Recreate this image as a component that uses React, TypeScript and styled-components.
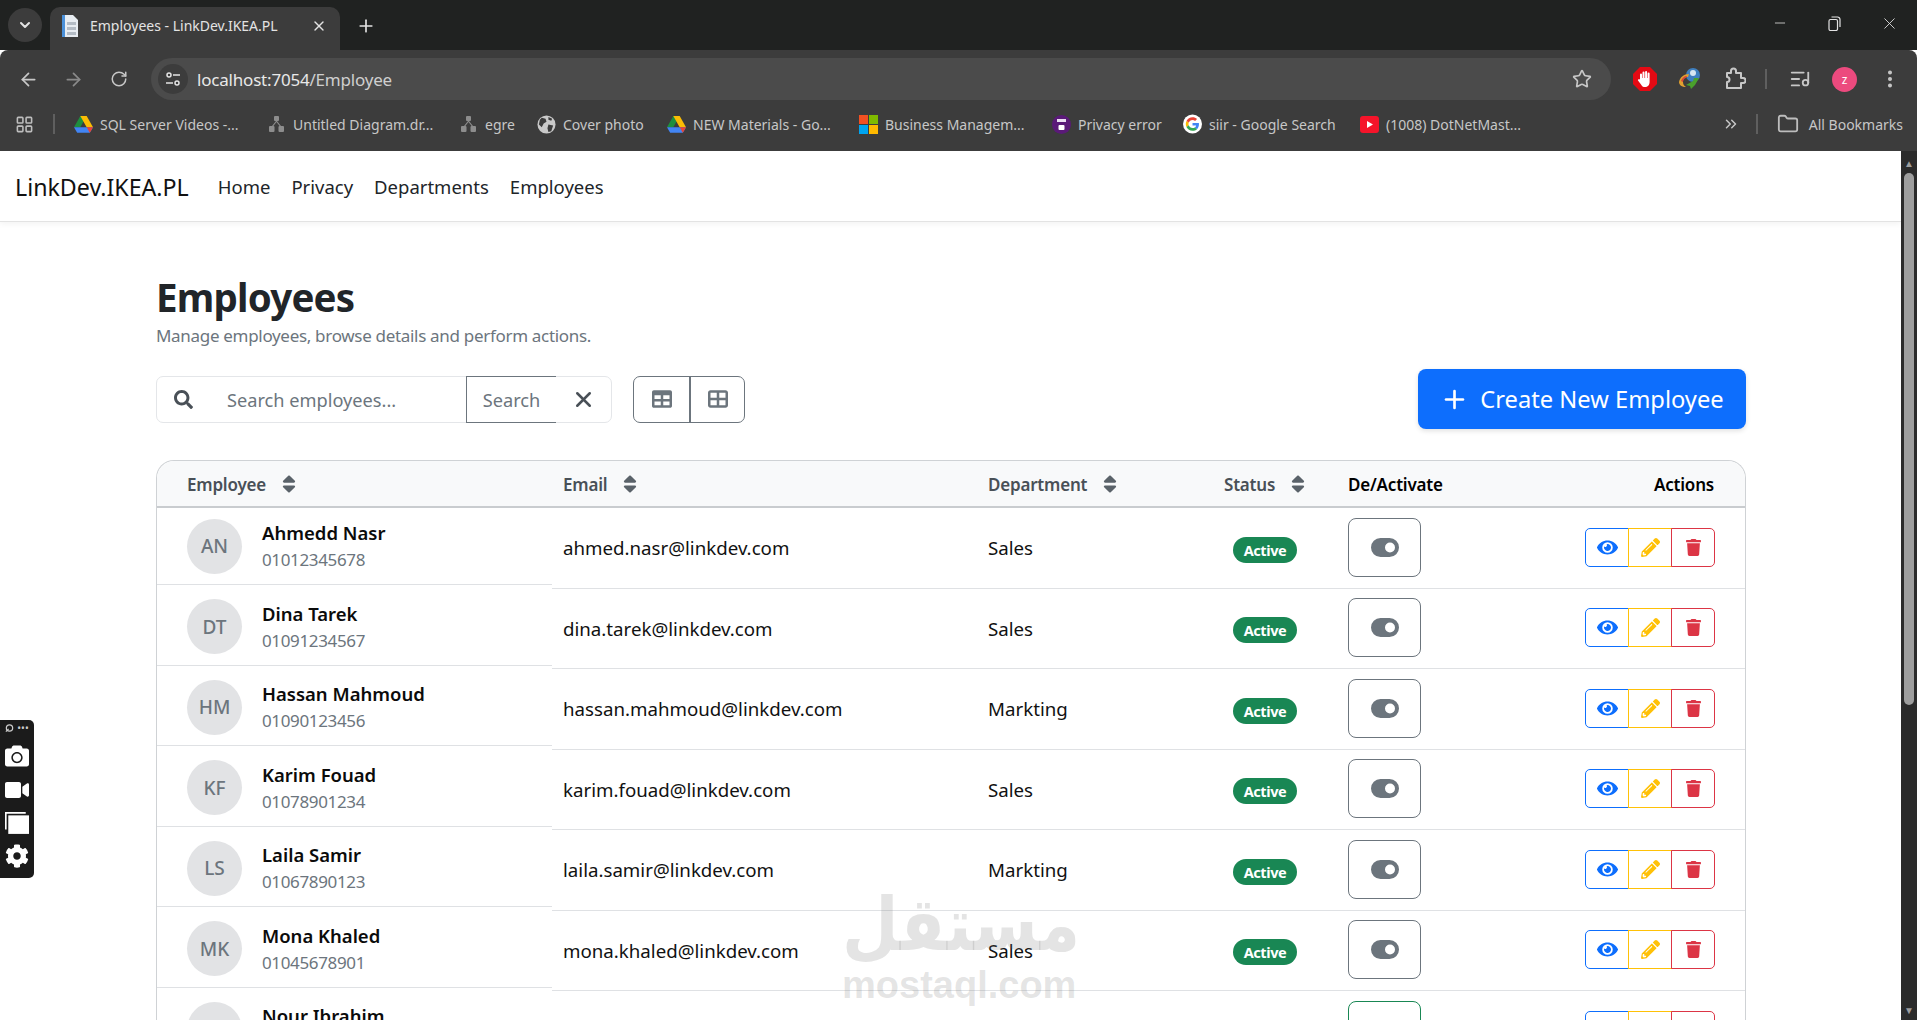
import React from 'react';
import styled, { createGlobalStyle } from 'styled-components';
import {
  FaCamera,
  FaCog,
  FaEye,
  FaPencilAlt,
  FaSearch,
  FaSort,
  FaTable,
  FaTrash,
  FaVideo,
} from 'react-icons/fa';
import { FaTableCellsLarge } from 'react-icons/fa6';
import {
  ArrowLeft,
  ArrowRight,
  ChevronDown,
  ChevronsRight,
  EllipsisVertical,
  Folder,
  LayoutGrid,
  ListMusic,
  Minus,
  Plus,
  RotateCw,
  Star,
  X,
} from 'lucide-react';

const UI_FONT = '"Noto Sans", "Open Sans", sans-serif';

const GlobalStyle = createGlobalStyle`
  html, body {
    margin: 0;
    height: 100%;
    overflow: hidden;
    background: #fff;
    font-family: ${UI_FONT};
  }
  * { box-sizing: border-box; }
`;

const Shell = styled.div`
  position: relative;
  height: 100vh;
  display: flex;
  flex-direction: column;
  overflow: hidden;
`;

/* ---- browser chrome ---- */

const TabStrip = styled.div`
  height: 50px;
  flex: none;
  display: flex;
  align-items: flex-end;
  background: #202221;
  padding-left: 8px;
  color: #e3e3e3;
`;

const TabSearch = styled.div`
  width: 34px;
  height: 34px;
  margin: 0 8px 8px 0;
  border-radius: 17px;
  background: #3c3c3c;
  display: flex;
  align-items: center;
  justify-content: center;
`;

const Tab = styled.div`
  width: 290px;
  height: 43px;
  background: #3c3c3c;
  border-radius: 10px 10px 0 0;
  display: flex;
  align-items: center;
  padding: 0 13px 6px 10px;
  gap: 10px;
  font-size: 14px;
`;

const TabTitle = styled.span`
  flex: 1;
  white-space: nowrap;
`;

const NewTab = styled.div`
  width: 52px;
  height: 43px;
  padding-bottom: 6px;
  display: flex;
  align-items: center;
  justify-content: center;
`;

const WindowControls = styled.div`
  margin-left: auto;
  height: 46px;
  align-self: flex-start;
  display: flex;
  align-items: center;
`;

const WindowButton = styled.div`
  width: 55px;
  display: flex;
  justify-content: center;
  color: #e3e3e3;
`;

const Toolbar = styled.div`
  height: 50px;
  flex: none;
  background: #3c3c3c;
  display: flex;
  align-items: center;
  padding: 8px 0 0 6px;
  border-radius: 8px 8px 0 0;
`;

const NavIcon = styled.div<{ $dim?: boolean }>`
  width: 45px;
  display: flex;
  justify-content: center;
  color: ${(p) => (p.$dim ? '#8a8a8a' : '#c7c7c7')};
`;

const Omnibox = styled.div`
  width: 1460px;
  height: 42px;
  margin-left: 10px;
  background: #4b4b4b;
  border-radius: 21px;
  display: flex;
  align-items: center;
  padding: 0 19px 0 7px;
  font-size: 17px;
  letter-spacing: -0.2px;
`;

const SiteChip = styled.div`
  width: 30px;
  height: 30px;
  border-radius: 50%;
  background: #3c3c3c;
  display: flex;
  align-items: center;
  justify-content: center;
  margin-right: 9px;
`;

const Host = styled.span`
  color: #e8e8e8;
`;

const UrlPath = styled.span`
  color: #cfcfcf;
  flex: 1;
`;

const ExtArea = styled.div`
  margin-left: 11px;
  display: flex;
  align-items: center;
`;

const ExtSlot = styled.div`
  width: 45px;
  display: flex;
  justify-content: center;
  align-items: center;
  color: #c7c7c7;
`;

const ToolbarRule = styled.div`
  width: 2px;
  height: 20px;
  margin: 0 10px 0 8px;
  background: #5f5f5f;
`;

const ProfileDot = styled.div`
  width: 25px;
  height: 25px;
  border-radius: 50%;
  background: #ec4a7e;
  color: #fff;
  font-size: 12px;
  display: flex;
  align-items: center;
  justify-content: center;
`;

const BookmarkBar = styled.div`
  height: 51px;
  flex: none;
  background: #3c3c3c;
  display: flex;
  align-items: center;
  padding: 0 0 3px 15px;
  font-size: 14px;
  color: #c7c7c7;
`;

const AppsSlot = styled.div`
  width: 38px;
  display: flex;
  color: #bdbdbd;
`;

const BarRule = styled.div`
  width: 2px;
  height: 20px;
  background: #5f5f5f;
  flex: none;
`;

const Bookmark = styled.div<{ $w: number }>`
  flex: none;
  width: ${(p) => p.$w}px;
  display: flex;
  align-items: center;
  white-space: nowrap;
  gap: 7px;
`;

const BookmarkIcon = styled.div`
  width: 19px;
  height: 19px;
  display: flex;
  align-items: center;
  justify-content: center;
  color: #9a9a9a;
`;

const BookmarkEnd = styled.div`
  margin-left: auto;
  display: flex;
  align-items: center;
  padding-right: 14px;
`;

/* ---- page ---- */

const Viewport = styled.div`
  flex: 1;
  min-height: 0;
  display: flex;
`;

const Page = styled.div`
  flex: 1;
  min-width: 0;
  overflow: hidden;
  color: #212529;
`;

const Scrollbar = styled.div`
  width: 16px;
  flex: none;
  background: #2b2b2b;
  display: flex;
  flex-direction: column;
  align-items: center;
  padding: 6px 0 4px;
  color: #9e9e9e;
  font-size: 10px;
  line-height: 12px;
`;

const ScrollThumb = styled.div`
  width: 10px;
  height: 532px;
  margin-top: 4px;
  border-radius: 5px;
  background: #9e9e9e;
`;

const ScrollEnd = styled.div`
  margin-top: auto;
`;

const Navbar = styled.nav`
  height: 71px;
  display: flex;
  align-items: center;
  padding: 1px 15px 0;
  background: #fff;
  border-bottom: 1px solid #e3e3e3;
  box-shadow: 0 2px 6px rgba(0, 0, 0, 0.05);
`;

const Brand = styled.a`
  font-size: 23.2px;
  color: #111;
  margin-right: 29px;
`;

const NavLink = styled.a`
  font-size: 18.5px;
  color: #212529;
  margin-right: 21px;
`;

const Main = styled.main`
  padding: 48px 155px 0 156px;
`;

const Title = styled.h1`
  margin: 0;
  font-size: 38.5px;
  line-height: 54px;
  font-weight: 700;
  letter-spacing: -0.8px;
`;

const Subtitle = styled.p`
  margin: 0;
  font-size: 17px;
  line-height: 24px;
  letter-spacing: -0.31px;
  color: #6c757d;
`;

const ActionBar = styled.div`
  display: flex;
  align-items: center;
  margin-top: 21px;
`;

const SearchGroup = styled.div`
  width: 456px;
  height: 47px;
  display: flex;
  align-items: stretch;
  border: 1px solid #e4e6e9;
  border-radius: 7px;
  font-size: 18.2px;
  color: #6c757d;
`;

const SearchIconBox = styled.div`
  width: 70px;
  flex: none;
  display: flex;
  align-items: center;
  padding-left: 17px;
  color: #495057;
`;

const Placeholder = styled.div`
  flex: 1;
  display: flex;
  align-items: center;
  padding-top: 2px;
`;

const SearchButton = styled.div`
  width: 90px;
  margin: -1px 0;
  padding-top: 2px;
  border: 1px solid #6c757d;
  border-right: 0;
  display: flex;
  align-items: center;
  justify-content: center;
`;

const ClearButton = styled.div`
  width: 55px;
  flex: none;
  display: flex;
  align-items: center;
  justify-content: center;
  color: #495057;
`;

const ViewToggle = styled.div`
  display: flex;
  height: 47px;
  margin-left: 21px;
  border: 1px solid #6c757d;
  border-radius: 7px;
  color: #6c757d;
`;

const ViewButton = styled.div`
  width: 55px;
  display: flex;
  align-items: center;
  justify-content: center;
  & + & {
    border-left: 2px solid #6c757d;
  }
`;

const CreateButton = styled.a`
  margin-left: auto;
  height: 60px;
  width: 328px;
  border-radius: 8px;
  background: #0d6efd;
  color: #fff;
  display: flex;
  align-items: center;
  justify-content: center;
  gap: 11px;
  font-size: 23.7px;
  box-shadow: 0 2px 5px rgba(0, 0, 0, 0.12);
`;

const TableCard = styled.div`
  margin-top: 31px;
  border: 1px solid #cfd2d5;
  border-bottom: 0;
  border-radius: 18px 18px 0 0;
`;

const columns = '395px 425px 236px 124px 160px 1fr';

const HeaderRow = styled.div`
  display: grid;
  grid-template-columns: ${columns};
  height: 47px;
  background: #f8f9fa;
  border-radius: 18px 18px 0 0;
  border-bottom: 2px solid #c9cccf;
`;

const HeadCell = styled.div<{ $pad: number; $strong?: boolean; $end?: boolean }>`
  display: flex;
  align-items: center;
  gap: 12px;
  padding: 1px ${(p) => (p.$end ? 31 : 0)}px 0 ${(p) => p.$pad}px;
  justify-content: ${(p) => (p.$end ? 'flex-end' : 'flex-start')};
  font-size: 17px;
  font-weight: 600;
  letter-spacing: -0.2px;
  color: ${(p) => (p.$strong ? '#000' : '#495057')};
`;

const Row = styled.div`
  display: grid;
  grid-template-columns: ${columns};
  height: 80.5px;
`;

const Cell = styled.div<{ $pad: number; $end?: boolean }>`
  display: flex;
  align-items: center;
  padding: 0 ${(p) => (p.$end ? 30 : 0)}px 0 ${(p) => p.$pad}px;
  justify-content: ${(p) => (p.$end ? 'flex-end' : 'flex-start')};
  border-bottom: 1px solid #dfe1e4;
  font-size: 18.7px;
  color: #111;
`;

const EmployeeCell = styled.div`
  height: 77px;
  display: flex;
  align-items: center;
  gap: 20px;
  padding-left: 30px;
  border-bottom: 1px solid #dfe1e4;
`;

const Initials = styled.div`
  width: 55px;
  height: 55px;
  flex: none;
  border-radius: 50%;
  background: #e2e3e5;
  color: #6c757d;
  display: flex;
  align-items: center;
  justify-content: center;
  font-size: 19px;
  font-weight: 500;
`;

const Name = styled.div`
  font-size: 18.5px;
  line-height: 27px;
  font-weight: 600;
  color: #0b0b0b;
`;

const Phone = styled.div`
  font-size: 17px;
  line-height: 27px;
  letter-spacing: -0.35px;
  color: #6c757d;
`;

const Badge = styled.span`
  display: inline-flex;
  align-items: center;
  justify-content: center;
  width: 64px;
  height: 26px;
  margin-top: 4px;
  border-radius: 13px;
  background: #198754;
  color: #fff;
  font-size: 14.5px;
  font-weight: 700;
  letter-spacing: -0.4px;
`;

const ToggleButton = styled.div<{ $on?: boolean }>`
  width: 73px;
  height: 59px;
  margin-bottom: 1px;
  border: 1px solid ${(p) => (p.$on ? '#198754' : '#6c757d')};
  border-radius: 8px;
  display: flex;
  align-items: center;
  justify-content: center;
  color: ${(p) => (p.$on ? '#198754' : '#6c757d')};
`;

const ActionGroup = styled.div`
  display: flex;
  height: 39px;
  margin-bottom: 1px;
`;

const ActionButton = styled.div<{ $color: string }>`
  width: 44px;
  border: 1px solid ${(p) => p.$color};
  color: ${(p) => p.$color};
  display: flex;
  align-items: center;
  justify-content: center;
  margin-left: -1px;
  &:first-child {
    border-radius: 5px 0 0 5px;
  }
  &:last-child {
    border-radius: 0 5px 5px 0;
  }
`;

/* ---- things lying over the page ---- */

const CapturePanel = styled.div`
  position: absolute;
  left: 0;
  top: 720px;
  width: 34px;
  height: 158px;
  background: #1b1b1b;
  border-radius: 0 5px 5px 0;
  display: flex;
  flex-direction: column;
  align-items: center;
  gap: 10px;
  padding-top: 2px;
  color: #fff;
`;

const PanelTop = styled.div`
  display: flex;
  align-items: center;
  gap: 3px;
  color: #ccc;
  height: 12px;
  font-size: 10px;
  line-height: 6px;
`;

const Watermark = styled.div`
  position: absolute;
  left: 842px;
  top: 881px;
  width: 232px;
  pointer-events: none;
  color: rgba(120, 120, 120, 0.2);
`;

const WatermarkArabic = styled.div`
  font-family: 'DejaVu Sans', sans-serif;
  font-size: 74px;
  font-weight: 700;
  line-height: 86px;
  transform: scaleX(0.88);
  transform-origin: left center;
  white-space: nowrap;
`;

const WatermarkLatin = styled.div`
  font-family: 'Liberation Sans', sans-serif;
  font-size: 38px;
  font-weight: 700;
  line-height: 36px;
  white-space: nowrap;
`;

/* ---- small logos ---- */

const DriveLogo = () => (
  <svg width="19" height="18" viewBox="0 0 24 22">
    <polygon points="8,0 16,0 8,14 0,14" fill="#1e8e3e" transform="translate(0,1)" />
    <polygon points="16,1 24,15 16,15 8,1" fill="#fbbc04" />
    <polygon points="4,15 24,15 20,22 4,22 0,15" fill="#4285f4" />
    <polygon points="24,15 20,22 16,15" fill="#ea4335" />
  </svg>
);

const DiagramLogo = () => (
  <svg width="15" height="16" viewBox="0 0 15 16" fill="#8d8d8d">
    <rect x="5" y="0" width="5" height="5" rx="1" />
    <rect x="0" y="10" width="5.5" height="6" rx="1" />
    <rect x="9.5" y="10" width="5.5" height="6" rx="1" />
    <path d="M7 5 3 10h1.4L7.5 6l3.1 4H12L8 5z" />
  </svg>
);

const GlobeLogo = () => (
  <svg width="19" height="19" viewBox="0 0 20 20">
    <circle cx="10" cy="10" r="9.5" fill="#c9c9c9" />
    <path d="M5 3l4 1 1 3-3 2-2 4-3-3 1-5zM12 10l5 1-2 6-3 1-1-4zM12 2l4 2-1 2-3-1z" fill="#3c3c3c" />
  </svg>
);

const MicrosoftLogo = () => (
  <svg width="19" height="19" viewBox="0 0 19 19">
    <rect width="9" height="9" fill="#f25022" />
    <rect x="10" width="9" height="9" fill="#7fba00" />
    <rect y="10" width="9" height="9" fill="#00a4ef" />
    <rect x="10" y="10" width="9" height="9" fill="#ffb900" />
  </svg>
);

const SiirLogo = () => (
  <svg width="19" height="19" viewBox="0 0 19 19">
    <circle cx="9.5" cy="9.5" r="9.5" fill="#5a1a78" />
    <rect x="5" y="4" width="9" height="3" fill="#e9dff0" />
    <rect x="6.5" y="10" width="6" height="5" rx="1" fill="#fff" />
  </svg>
);

const GoogleLogo = () => (
  <svg width="20" height="20" viewBox="0 0 48 48">
    <circle cx="24" cy="24" r="24" fill="#fff" />
    <g transform="translate(7 7) scale(0.71)">
      <path fill="#EA4335" d="M24 9.5c3.5 0 6.7 1.2 9.2 3.6l6.9-6.9C35.9 2.4 30.5 0 24 0 14.6 0 6.5 5.4 2.6 13.2l8 6.2C12.4 13.7 17.7 9.5 24 9.5z" />
      <path fill="#4285F4" d="M46.9 24.5c0-1.6-.1-3.1-.4-4.5H24v9h12.9c-.6 3-2.2 5.5-4.8 7.2l7.7 6c4.5-4.2 7.1-10.3 7.1-17.7z" />
      <path fill="#FBBC05" d="M10.5 28.6c-.5-1.4-.8-3-.8-4.6s.3-3.2.8-4.6l-8-6.2C.9 16.5 0 20.1 0 24s.9 7.5 2.6 10.8l7.9-6.2z" />
      <path fill="#34A853" d="M24 48c6.5 0 11.9-2.1 15.9-5.8l-7.7-6c-2.2 1.4-4.9 2.3-8.2 2.3-6.3 0-11.6-4.2-13.5-9.9l-8 6.2C6.5 42.6 14.6 48 24 48z" />
    </g>
  </svg>
);

const YoutubeLogo = () => (
  <svg width="19" height="19" viewBox="0 0 19 19">
    <rect y="1" width="19" height="17" rx="3" fill="#f5142a" />
    <polygon points="7,6 13,9.5 7,13" fill="#fff" />
  </svg>
);

const Favicon = () => (
  <svg width="20" height="24" viewBox="0 0 20 24">
    <path d="M2 1h11l5 5v17H2z" fill="#e8edf2" />
    <rect x="2" y="1" width="3" height="22" fill="#4a90d9" />
    <path d="M7 8h9v3H7zM7 13h9v3H7zM7 18h9v3H7z" fill="#b4bcc5" />
  </svg>
);

const TuneGlyph = () => (
  <svg width="16" height="16" viewBox="0 0 16 16" fill="none" stroke="#e3e3e3" strokeWidth="1.5">
    <circle cx="4" cy="4" r="2" />
    <circle cx="12" cy="12" r="2" />
    <path d="M8 4h7M1 12h7" />
  </svg>
);

const RestoreGlyph = () => (
  <svg width="13" height="15" viewBox="0 0 13 15" fill="none" stroke="#e3e3e3" strokeWidth="1.2">
    <rect x="1" y="3.5" width="8.5" height="11" rx="1.5" />
    <path d="M3.5 1h6a2.5 2.5 0 0 1 2.5 2.5V11" />
  </svg>
);

const BlockerLogo = () => (
  <svg width="24" height="24" viewBox="0 0 24 24">
    <polygon points="7,0 17,0 24,7 24,17 17,24 7,24 0,17 0,7" fill="#e40a14" />
    <path d="M7 12V7.5a1 1 0 0 1 2 0V11h.5V5.5a1 1 0 0 1 2 0V11h.6V5a1 1 0 0 1 2 0v6h.5V6.5a1 1 0 0 1 2 0V15c0 3-2 5-4.6 5-2 0-3.2-1-4-2.6L5 13.5c-.5-1 .9-1.8 1.6-.9z" fill="#fff" />
  </svg>
);

const DownloaderLogo = () => (
  <svg width="24" height="24" viewBox="0 0 24 24">
    <circle cx="15" cy="8" r="7" fill="#3f7fbf" />
    <circle cx="15" cy="6" r="3" fill="#d8e6f2" />
    <path d="M1 15c1-5 5-8 10-8l-1 3c-3 0-5 2-5 5 0 2 1 4 3 5-4 0-7-2-7-5z" fill="#e0a030" />
    <path d="M3 14c1-3 3-5 6-5l-1 2c-2 0-3 2-3 4z" fill="#d8423a" />
    <path d="M8 18l7-4 1-3h5l-4 7-4 4-1-3z" fill="#4aa02c" />
  </svg>
);

const PuzzleGlyph = () => (
  <svg width="22" height="24" viewBox="0 0 22 24" fill="none" stroke="#c7c7c7" strokeWidth="2" strokeLinejoin="round">
    <path d="M3 6h4V4a2.5 2.5 0 0 1 5 0v2h5v5h2a2.5 2.5 0 0 1 0 5h-2v5H3v-6a2.5 2.5 0 0 0 0-5z" />
  </svg>
);

// the app's toggle is a short pill, fatter than the icon-font ones
const TogglePill = () => (
  <svg width="28" height="19" viewBox="0 0 28 19">
    <path
      fillRule="evenodd"
      fill="currentColor"
      d="M9.5 0h9a9.5 9.5 0 0 1 0 19h-9a9.5 9.5 0 0 1 0-19zM19 4.5a5 5 0 1 0 0 10 5 5 0 0 0 0-10z"
    />
  </svg>
);

const SortIcon = () => <FaSort size={22} color="#5a6269" />;

type Employee = {
  initials: string;
  name: string;
  phone: string;
  email: string;
  department: string;
  fresh?: boolean;
};

const employees: Employee[] = [
  { initials: 'AN', name: 'Ahmedd Nasr', phone: '01012345678', email: 'ahmed.nasr@linkdev.com', department: 'Sales' },
  { initials: 'DT', name: 'Dina Tarek', phone: '01091234567', email: 'dina.tarek@linkdev.com', department: 'Sales' },
  { initials: 'HM', name: 'Hassan Mahmoud', phone: '01090123456', email: 'hassan.mahmoud@linkdev.com', department: 'Markting' },
  { initials: 'KF', name: 'Karim Fouad', phone: '01078901234', email: 'karim.fouad@linkdev.com', department: 'Sales' },
  { initials: 'LS', name: 'Laila Samir', phone: '01067890123', email: 'laila.samir@linkdev.com', department: 'Markting' },
  { initials: 'MK', name: 'Mona Khaled', phone: '01045678901', email: 'mona.khaled@linkdev.com', department: 'Sales' },
  { initials: 'NI', name: 'Nour Ibrahim', phone: '01034567890', email: '', department: '', fresh: true },
];

const bookmarks = [
  { w: 193, label: 'SQL Server Videos -...', icon: <DriveLogo /> },
  { w: 192, label: 'Untitled Diagram.dr...', icon: <DiagramLogo /> },
  { w: 78, label: 'egre', icon: <DiagramLogo /> },
  { w: 130, label: 'Cover photo', icon: <GlobeLogo /> },
  { w: 192, label: 'NEW Materials - Go...', icon: <DriveLogo /> },
  { w: 193, label: 'Business Managem...', icon: <MicrosoftLogo /> },
  { w: 131, label: 'Privacy error', icon: <SiirLogo /> },
  { w: 177, label: 'siir - Google Search', icon: <GoogleLogo /> },
  { w: 150, label: '(1008) DotNetMast...', icon: <YoutubeLogo /> },
];

export default function App() {
  return (
    <Shell>
      <GlobalStyle />
      <TabStrip>
        <TabSearch>
          <ChevronDown size={16} strokeWidth={3} />
        </TabSearch>
        <Tab>
          <Favicon />
          <TabTitle>Employees - LinkDev.IKEA.PL</TabTitle>
          <X size={16} strokeWidth={2} />
        </Tab>
        <NewTab>
          <Plus size={20} strokeWidth={2} />
        </NewTab>
        <WindowControls>
          <WindowButton>
            <Minus size={16} strokeWidth={1.2} />
          </WindowButton>
          <WindowButton>
            <RestoreGlyph />
          </WindowButton>
          <WindowButton>
            <X size={19} strokeWidth={1.1} />
          </WindowButton>
        </WindowControls>
      </TabStrip>

      <Toolbar>
        <NavIcon>
          <ArrowLeft size={21} strokeWidth={2} />
        </NavIcon>
        <NavIcon $dim>
          <ArrowRight size={21} strokeWidth={2} />
        </NavIcon>
        <NavIcon>
          <RotateCw size={18} strokeWidth={2} />
        </NavIcon>
        <Omnibox>
          <SiteChip>
            <TuneGlyph />
          </SiteChip>
          <Host>localhost:7054</Host>
          <UrlPath>/Employee</UrlPath>
          <Star size={20} color="#c7c7c7" strokeWidth={2} />
        </Omnibox>
        <ExtArea>
          <ExtSlot>
            <BlockerLogo />
          </ExtSlot>
          <ExtSlot>
            <DownloaderLogo />
          </ExtSlot>
          <ExtSlot>
            <PuzzleGlyph />
          </ExtSlot>
          <ToolbarRule />
          <ExtSlot>
            <ListMusic size={22} strokeWidth={2} />
          </ExtSlot>
          <ExtSlot>
            <ProfileDot>z</ProfileDot>
          </ExtSlot>
          <ExtSlot>
            <EllipsisVertical size={22} strokeWidth={2.4} />
          </ExtSlot>
        </ExtArea>
      </Toolbar>

      <BookmarkBar>
        <AppsSlot>
          <LayoutGrid size={19} strokeWidth={2} />
        </AppsSlot>
        <BarRule />
        <Bookmark $w={19} />
        {bookmarks.map((b) => (
          <Bookmark key={b.label} $w={b.w}>
            <BookmarkIcon>{b.icon}</BookmarkIcon>
            {b.label}
          </Bookmark>
        ))}
        <BookmarkEnd>
          <ChevronsRight size={18} strokeWidth={2} />
          <Bookmark $w={16} />
          <BarRule />
          <Bookmark $w={19} />
          <Folder size={22} strokeWidth={2} color="#bdbdbd" />
          <Bookmark $w={10} />
          All Bookmarks
        </BookmarkEnd>
      </BookmarkBar>

      <Viewport>
        <Page>
          <Navbar>
            <Brand>LinkDev.IKEA.PL</Brand>
            <NavLink>Home</NavLink>
            <NavLink>Privacy</NavLink>
            <NavLink>Departments</NavLink>
            <NavLink>Employees</NavLink>
          </Navbar>
          <Main>
            <Title>Employees</Title>
            <Subtitle>Manage employees, browse details and perform actions.</Subtitle>
            <ActionBar>
              <SearchGroup>
                <SearchIconBox>
                  <FaSearch size={19} />
                </SearchIconBox>
                <Placeholder>Search employees...</Placeholder>
                <SearchButton>Search</SearchButton>
                <ClearButton>
                  <X size={25} strokeWidth={2.4} />
                </ClearButton>
              </SearchGroup>
              <ViewToggle>
                <ViewButton>
                  <FaTable size={20} />
                </ViewButton>
                <ViewButton>
                  <FaTableCellsLarge size={20} />
                </ViewButton>
              </ViewToggle>
              <CreateButton>
                <Plus size={29} strokeWidth={2.2} />
                Create New Employee
              </CreateButton>
            </ActionBar>

            <TableCard>
              <HeaderRow>
                <HeadCell $pad={30}>
                  Employee <SortIcon />
                </HeadCell>
                <HeadCell $pad={11}>
                  Email <SortIcon />
                </HeadCell>
                <HeadCell $pad={11}>
                  Department <SortIcon />
                </HeadCell>
                <HeadCell $pad={11}>
                  Status <SortIcon />
                </HeadCell>
                <HeadCell $pad={11} $strong>
                  De/Activate
                </HeadCell>
                <HeadCell $pad={0} $strong $end>
                  Actions
                </HeadCell>
              </HeaderRow>
              {employees.map((e) => (
                <Row key={e.initials}>
                  <EmployeeCell>
                    <Initials>{e.initials}</Initials>
                    <div>
                      <Name>{e.name}</Name>
                      <Phone>{e.phone}</Phone>
                    </div>
                  </EmployeeCell>
                  <Cell $pad={11}>{e.email}</Cell>
                  <Cell $pad={11}>{e.department}</Cell>
                  <Cell $pad={20}>
                    <Badge>Active</Badge>
                  </Cell>
                  <Cell $pad={11}>
                    <ToggleButton $on={e.fresh}>
                      {!e.fresh && <TogglePill />}
                    </ToggleButton>
                  </Cell>
                  <Cell $pad={0} $end>
                    <ActionGroup>
                      <ActionButton $color="#0d6efd">
                        <FaEye size={21} />
                      </ActionButton>
                      <ActionButton $color="#ffc107">
                        <FaPencilAlt size={19} />
                      </ActionButton>
                      <ActionButton $color="#dc3545">
                        <FaTrash size={17} />
                      </ActionButton>
                    </ActionGroup>
                  </Cell>
                </Row>
              ))}
            </TableCard>
          </Main>
        </Page>
        <Scrollbar>
          ▲
          <ScrollThumb />
          <ScrollEnd>▼</ScrollEnd>
        </Scrollbar>
      </Viewport>

      <CapturePanel>
        <PanelTop>
          <svg width="9" height="10" viewBox="0 0 10 10" fill="none" stroke="#ccc" strokeWidth="1.4">
            <circle cx="5" cy="5" r="3.5" />
            <path d="M1 9l3-3" />
          </svg>
          •••
        </PanelTop>
        <FaCamera size={24} />
        <FaVideo size={24} />
        <svg width="24" height="22" viewBox="0 0 22 20" fill="#fff">
          <path d="M0 0h19v1.5H1.5V16H0z" />
          <rect x="3" y="3" width="19" height="17" />
        </svg>
        <FaCog size={24} />
      </CapturePanel>

      <Watermark>
        <WatermarkArabic>مستقل</WatermarkArabic>
        <WatermarkLatin>mostaql.com</WatermarkLatin>
      </Watermark>
    </Shell>
  );
}
